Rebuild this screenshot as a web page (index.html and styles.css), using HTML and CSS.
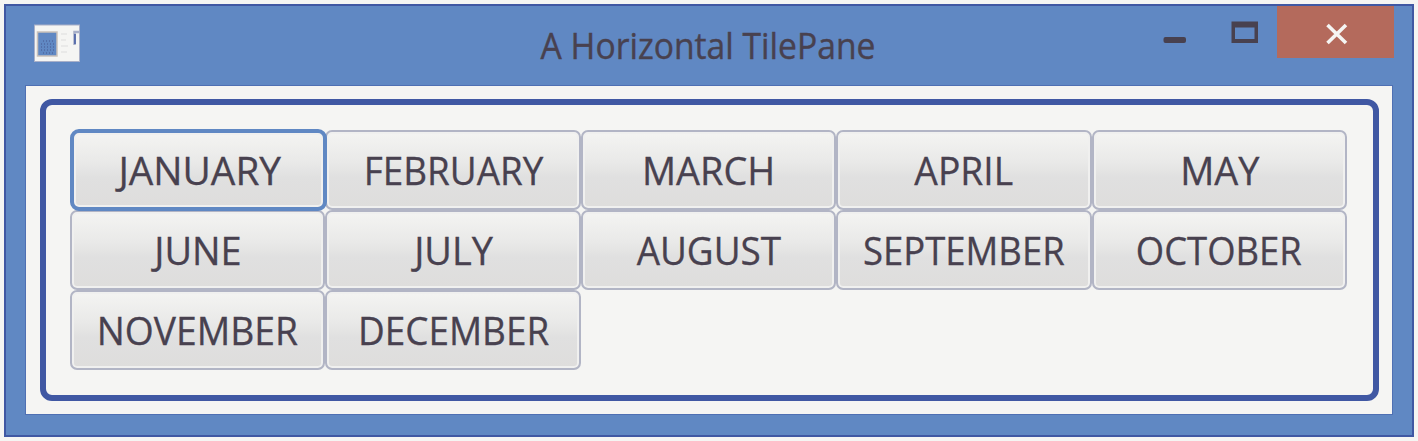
FILE: index.html
```html
<!DOCTYPE html>
<html lang="en">
<head>
<meta charset="utf-8">
<title>A Horizontal TilePane</title>
<link rel="stylesheet" href="styles.css">
</head>
<body>
<main class="window">
  <header class="titlebar">
    <svg class="app-icon" width="48" height="42" viewBox="0 0 48 42">
      <rect x="1.5" y="2" width="45" height="36.500" fill="#f5f5f3" stroke="#a9b0c8"/>
      <rect x="4.500" y="9" width="19.500" height="24" fill="#6088c3" stroke="#c9c1bb" stroke-width="1.5"/>
      <path d="M10 18h11M8 21h14M8 24h14M8 27h14M10 30h12" stroke="#465890" stroke-width="1" stroke-dasharray="1 2"/>
      <path d="M28 11h6M28 17h5M28 23h7M28 29h6" stroke="#e9e9e8" stroke-width="2"/>
      <path d="M41.500 22V9H46" fill="none" stroke="#a9b0c8" stroke-width="2.500"/>
      <path d="M42 11v10" stroke="#4058a3" stroke-width="1.500"/>
    </svg>
    <h1 class="title">A Horizontal TilePane</h1>
    <div class="controls">
      <svg class="control-icons" width="104" height="52" viewBox="0 0 104 52">
        <rect x="-.5" y="31" width="22.5" height="6" rx="2" fill="#48414f"/>
        <path fill="#48414f" fill-rule="evenodd" d="M67.500 15.500h26.500v21.500h-26.500zM71 21.500v11.500h19.500v-11.500z"/>
      </svg>
      <div class="close">
        <svg width="24" height="22" viewBox="0 0 24 22"><path d="M2.500 2L21 20M21 2L2.500 20" stroke="#f5f5f3" stroke-width="3.600"/></svg>
      </div>
    </div>
  </header>
  <section class="content">
    <div class="tile-pane">
      <button class="tile focused"><span class="wide">JANUARY</span></button>
      <button class="tile"><span class="narrow">FEBRUARY</span></button>
      <button class="tile"><span class="loose">MARCH</span></button>
      <button class="tile"><span>APRIL</span></button>
      <button class="tile"><span class="loose">MAY</span></button>
      <button class="tile"><span class="loose">JUNE</span></button>
      <button class="tile"><span class="loose">JULY</span></button>
      <button class="tile"><span class="narrow">AUGUST</span></button>
      <button class="tile"><span class="tight">SEPTEMBER</span></button>
      <button class="tile"><span class="tight">OCTOBER</span></button>
      <button class="tile"><span>NOVEMBER</span></button>
      <button class="tile"><span class="narrow">DECEMBER</span></button>
    </div>
  </section>
</main>
</body>
</html>
```
FILE: styles.css
```css
* { box-sizing: border-box; }
body {
  margin: 0;
  padding: 4px 4px 0;
  height: 441px;
  overflow: hidden;
  background: #f5f5f3;
  font-family: "Open Sans", "Noto Sans", sans-serif;
  color: #48414f;
}
.window {
  width: 1410px;
  height: 433px;
  border: 2px solid #4058a3;
  background: #6088c3;
  padding: 0 19px 20px 19px;
  display: flex;
  flex-direction: column;
}
.titlebar {
  height: 79px;
  flex: none;
  display: grid;
  grid-template-columns: 400px 1fr 400px;
}
.app-icon { margin: 17px 0 0 8px; }
.title {
  margin: 15px 0 0;
  font-size: 36px;
  line-height: 50px;
  font-weight: 400;
  text-align: center;
  white-space: nowrap;
  transform: translateX(-1px) scaleX(.935);
  -webkit-text-stroke: .4px #48414f;
}
.controls { display: flex; justify-content: flex-end; }
.control-icons { margin-right: 9px; overflow: visible; }
.close {
  width: 117px;
  height: 52px;
  margin-right: -1px;
  background: #b46a5c;
  display: flex;
  align-items: center;
  justify-content: center;
  padding-top: 3px;
  padding-left: 3px;
}
.content {
  flex: 1;
  background: #f5f5f3;
  border: 1px solid #4f70b3;
  padding: 13px 13px 12px 14px;
}
.tile-pane {
  height: 302px;
  border: 6px solid #4058a3;
  border-radius: 12px;
  padding: 25px 26px 25px 24px;
  display: grid;
  grid-template-columns: repeat(5, 1fr);
  grid-auto-rows: 80px;
}
.tile {
  margin: 0;
  padding: 0;
  border: 2px solid #b2b5c5;
  border-radius: 7px;
  background: linear-gradient(#f4f4f2, #e9e9e8 40%, #e0e0e0 60%, #dedddc);
  box-shadow: inset 0 0 0 2px #f0f0ef;
  font: 39px/76px "Open Sans", "Noto Sans", sans-serif;
  color: #48414f;
  display: flex;
  justify-content: center;
  align-items: center;
  white-space: nowrap;
}
.tile span { transform: scaleX(.955); -webkit-text-stroke: .3px #48414f; }
.tile .wide { transform: translateX(1px) scaleX(.995); }
.tile .loose { transform: scaleX(.972); }
.tile .narrow { transform: translateX(.5px) scaleX(.945); }
.tile .tight { transform: scaleX(.935); }
.focused {
  border: 4px solid #6088c3;
  border-radius: 9px;
  margin: -1px -2px -1px 0;
  z-index: 1;
}
```
